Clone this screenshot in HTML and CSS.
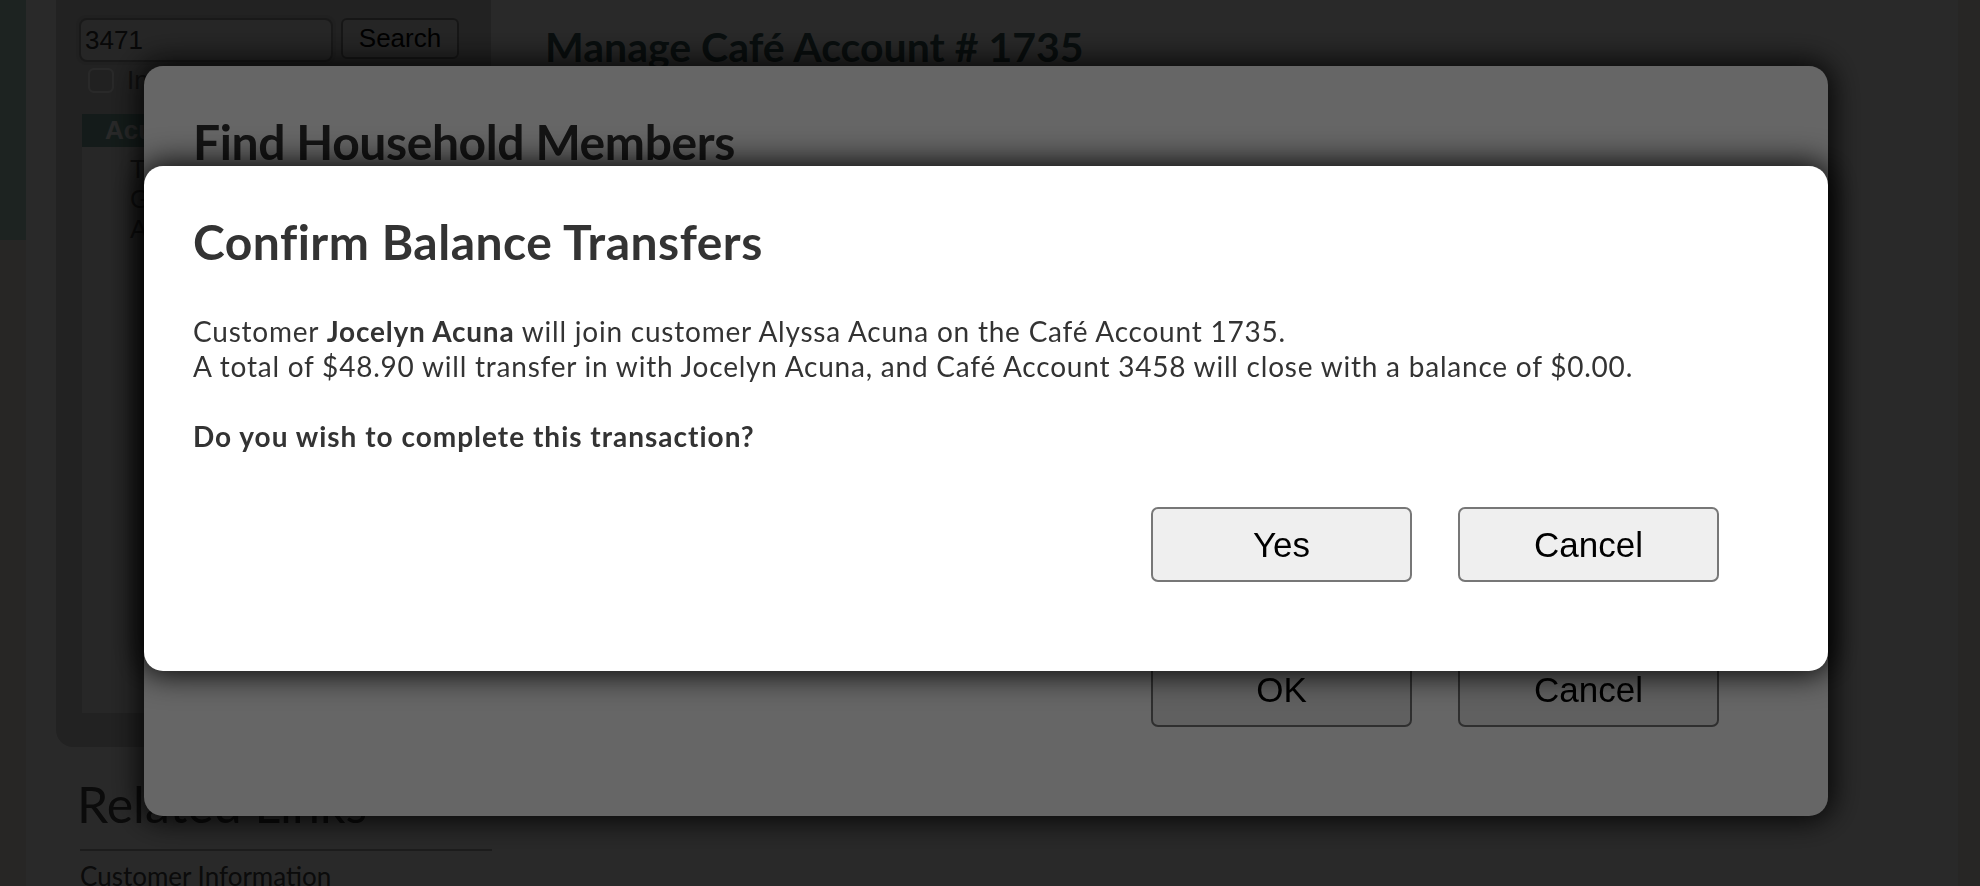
FILE: index.html
```html
<!DOCTYPE html>
<html lang="en">
<head>
<meta charset="utf-8">
<title>Manage Café Account # 1735</title>
<link rel="stylesheet" href="styles.css">
</head>
<body>
<div class="page">
  <div class="edge edge-left"></div>
  <aside class="sidebar">
    <div class="search-panel">
      <div class="search-row">
        <input class="search-input" type="text" value="3471">
        <button class="search-btn" type="button">Search</button>
      </div>
      <label class="check-row"><span class="checkbox"></span>Include inactive accounts</label>
      <div class="results">
        <div class="results-head">Acuna Household</div>
        <div class="result">Tomas Acuna</div>
        <div class="result">Gloria Acuna</div>
        <div class="result">Alyssa Acuna</div>
      </div>
    </div>
    <h2 class="related-title">Related Links</h2>
    <hr class="related-rule">
    <ul class="related-list">
      <li>Customer Information</li>
    </ul>
  </aside>
  <main class="main">
    <h1 class="page-title">Manage Café Account # 1735</h1>
  </main>
  <div class="edge edge-right"></div>
</div>

<div class="overlay"></div>
<section class="modal modal-back">
  <h2 class="modal-title">Find Household Members</h2>
  <div class="modal-body back-body"></div>
  <div class="modal-actions">
    <button class="modal-btn" type="button">OK</button>
    <button class="modal-btn" type="button">Cancel</button>
  </div>
</section>

<div class="overlay"></div>
<section class="modal modal-front">
  <h2 class="modal-title">Confirm Balance Transfers</h2>
  <div class="modal-body">
    <p>Customer <b>Jocelyn Acuna</b> will join customer Alyssa Acuna on the Café Account 1735.<br>A total of $48.90 will transfer in with Jocelyn Acuna, and Café Account 3458 will close with a balance of $0.00.</p>
    <p class="modal-question">Do you wish to complete this transaction?</p>
  </div>
  <div class="modal-actions">
    <button class="modal-btn" type="button">Yes</button>
    <button class="modal-btn" type="button">Cancel</button>
  </div>
</section>
</body>
</html>
```

FILE: styles.css
```css
* { box-sizing: border-box; }

html, body {
  margin: 0;
  padding: 0;
}

body {
  width: 1980px;
  height: 886px;
  overflow: hidden;
  background: #ffffff;
  font-family: "Lato", "Open Sans", sans-serif;
}

.page {
  display: flex;
  height: 886px;
}

.edge {
  flex: none;
  height: 100%;
}

.edge-left {
  width: 26px;
  background: linear-gradient(#b4d6cf 0, #b4d6cf 240px, #efece6 240px);
}

.edge-right {
  width: 22px;
  margin-left: auto;
  background: #efece6;
}

/* ---------- sidebar ---------- */
.sidebar {
  flex: none;
  width: 435px;
  margin-left: 30px;
}

.search-panel {
  background: #d0d0d0;
  border-radius: 0 0 17px 17px;
  padding: 18px 32px 34px 23px;
}

.search-row {
  display: flex;
  align-items: flex-start;
  gap: 8px;
}

.search-input {
  width: 254px;
  height: 44px;
  padding: 0 4px;
  font: 26px "Liberation Sans", Arial, sans-serif;
  color: #333;
  background: #e8e8e8;
  border: 2px solid #9a9a9a;
  border-radius: 8px;
  box-shadow: 0 0 0 3px #c4c4c4;
  outline: none;
}

.search-btn {
  width: 118px;
  height: 41px;
  padding: 0;
  font: 26px "Liberation Sans", Arial, sans-serif;
  color: #000;
  background: #e6e6e6;
  border: 2px solid #8a8a8a;
  border-radius: 6px;
}

.check-row {
  display: flex;
  align-items: center;
  gap: 13px;
  height: 25px;
  margin: 6px 0 0 9px;
  font: 26px "Liberation Sans", Arial, sans-serif;
  color: #666;
  white-space: nowrap;
}

.checkbox {
  flex: none;
  width: 26px;
  height: 25px;
  background: #cfcfcf;
  border: 2px solid #ffffff;
  border-radius: 6px;
}

.results {
  height: 599px;
  margin: 21px 0 0 3px;
  background: #f2f2f2;
  overflow: hidden;
}

.results-head {
  height: 33px;
  padding-left: 23px;
  font: bold 26px/33px "Liberation Sans", Arial, sans-serif;
  color: #fff;
  background: #7aaa9f;
  white-space: nowrap;
}

.results-head + .result {
  margin-top: 7px;
}

.result {
  padding-left: 48px;
  font: 26px/30px "Liberation Sans", Arial, sans-serif;
  color: #666;
  white-space: nowrap;
}

.related-title {
  margin: 27px 0 0 21px;
  font: 400 50px/60px "Lato", sans-serif;
  color: #444;
}

.related-rule {
  width: 412px;
  margin: 15px 0 0 24px;
  border: 0;
  border-top: 2px solid #b0b0b0;
}

.related-list {
  list-style: none;
  margin: 10px 0 0 24px;
  padding: 0;
  font: 26px/30px "Lato", sans-serif;
  color: #444;
}

/* ---------- main ---------- */
.main {
  flex: none;
  margin-left: 54px;
}

.page-title {
  margin: 22px 0 0;
  font: bold 41px/50px "Lato", sans-serif;
  color: #3a5a5a;
}

/* ---------- modals ---------- */
.overlay {
  position: fixed;
  inset: 0;
  background: rgba(0, 0, 0, 0.6);
}

.modal {
  position: fixed;
  left: 144px;
  width: 1684px;
  padding: 47px 109px 89px 49px;
  background: #fff;
  border-radius: 19px;
  box-shadow: 0 0 30px 4px rgba(0, 0, 0, 0.9);
  color: #333;
}

.modal-back { top: 66px; }
.modal-front { top: 166px; }

.modal-title {
  margin: 0;
  font: bold 48px/58px "Lato", sans-serif;
  letter-spacing: 0.5px;
  color: #333;
}

.modal-back .modal-title {
  letter-spacing: -0.4px;
}

.modal-body {
  margin-top: 43px;
  font: 28px/35px "Lato", sans-serif;
  letter-spacing: 0.78px;
}

.modal-body p {
  margin: 0;
}

.modal-body .modal-question {
  margin-top: 35px;
  font-weight: bold;
  letter-spacing: 1px;
}

.back-body {
  height: 385px;
}

.modal-actions {
  display: flex;
  justify-content: flex-end;
  gap: 46px;
  margin-top: 53px;
}

.modal-btn {
  width: 261px;
  height: 75px;
  padding: 0;
  font: 35px "Liberation Sans", Arial, sans-serif;
  letter-spacing: 0;
  color: #000;
  background: #efefef;
  border: 2px solid #777;
  border-radius: 7px;
}
```
